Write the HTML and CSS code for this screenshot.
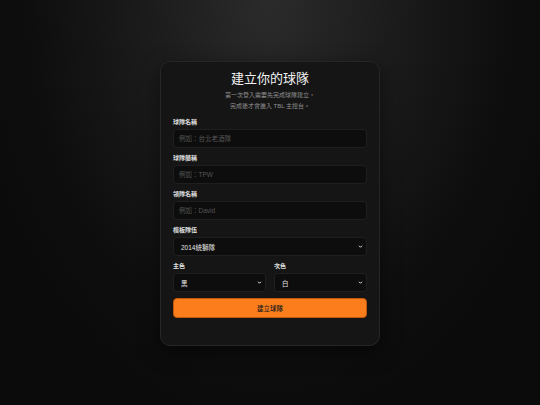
FILE: index.html
```html
<!DOCTYPE html>
<html lang="zh-Hant">
<head>
<meta charset="utf-8">
<link rel="stylesheet" href="styles.css">
</head>
<body>
<main class="page">
  <form class="card">
    <h1 class="title">建立你的球隊</h1>
    <p class="subtitle">第一次登入需要先完成球隊建立，<br>完成後才會進入 TBL 主控台。</p>
    <div class="field">
      <label class="label">球隊名稱</label>
      <input class="control" placeholder="例如：台北老酒隊">
    </div>
    <div class="field">
      <label class="label">球隊簡稱</label>
      <input class="control" placeholder="例如：TPW">
    </div>
    <div class="field">
      <label class="label">領隊名稱</label>
      <input class="control" placeholder="例如：David">
    </div>
    <div class="field">
      <label class="label">模板隊伍</label>
      <div class="select"><span>2014統獅隊</span><svg class="chev" viewBox="0 0 10 10"><path d="M2 3.5 L5 6.5 L8 3.5" fill="none" stroke="#e5e5e5" stroke-width="2"/></svg></div>
    </div>
    <div class="row">
      <div class="field">
        <label class="label">主色</label>
        <div class="select"><span>黑</span><svg class="chev" viewBox="0 0 10 10"><path d="M2 3.5 L5 6.5 L8 3.5" fill="none" stroke="#e5e5e5" stroke-width="2"/></svg></div>
      </div>
      <div class="field">
        <label class="label">次色</label>
        <div class="select"><span>白</span><svg class="chev" viewBox="0 0 10 10"><path d="M2 3.5 L5 6.5 L8 3.5" fill="none" stroke="#e5e5e5" stroke-width="2"/></svg></div>
      </div>
    </div>
    <button class="btn" type="button">建立球隊</button>
  </form>
</main>
</body>
</html>
```
FILE: styles.css
```css
* { box-sizing: border-box; }
html, body { margin: 0; height: 100%; }
body {
  background: radial-gradient(ellipse 300px 420px at 50% 0%, #2b2b2b 0%, #1a1a1a 45%, #0e0e0e 80%, #0b0b0b 100%);
  background-color: #0b0b0b;
  font-family: "Liberation Sans", "Noto Sans CJK TC", sans-serif;
  color: #e5e5e5;
}
.page {
  height: 405px;
  display: flex;
  justify-content: center;
  padding-top: 61px;
}
.card {
  width: 220px;
  height: 285px;
  background: #151515;
  border: 1px solid #262626;
  border-radius: 10px;
  padding: 8px 12px 0 12px;
  display: flex;
  flex-direction: column;
  box-shadow: 0 6px 20px rgba(0,0,0,0.5);
}
.title {
  margin: 0;
  text-align: center;
  font-size: 13px;
  font-weight: 400;
  line-height: 18px;
  color: #f2f2f2;
}
.subtitle {
  margin: 2px 0 0 0;
  text-align: center;
  font-size: 6px;
  line-height: 11px;
  color: #8f8f8f;
}
.field {
  display: flex;
  flex-direction: column;
  margin-top: 6px;
}
.subtitle + .field { margin-top: 6px; }
.label {
  font-size: 6px;
  font-weight: 700;
  line-height: 8px;
  color: #e0e0e0;
  margin-bottom: 3px;
}
.control, .select {
  height: 19px;
  width: 100%;
  background: #0d0d0d;
  border: 1px solid #1f1f1f;
  border-radius: 4px;
  padding: 0 5px;
  font-family: inherit;
  font-size: 6.5px;
  color: #e5e5e5;
  outline: none;
}
.control::placeholder { color: #555; }
.select {
  display: flex;
  align-items: center;
  justify-content: space-between;
  padding: 0 3px 0 7px;
}
.chev { width: 5px; height: 5px; }
.row {
  display: grid;
  grid-template-columns: 1fr 1fr;
  gap: 8px;
}
.btn {
  margin-top: 6px;
  height: 20px;
  border: 1px solid #c2560c;
  border-radius: 4px;
  background: #fb7d1c;
  color: #1a1a1a;
  font-family: inherit;
  font-size: 6.5px;
  font-weight: 500;
  padding: 0;
}
```
